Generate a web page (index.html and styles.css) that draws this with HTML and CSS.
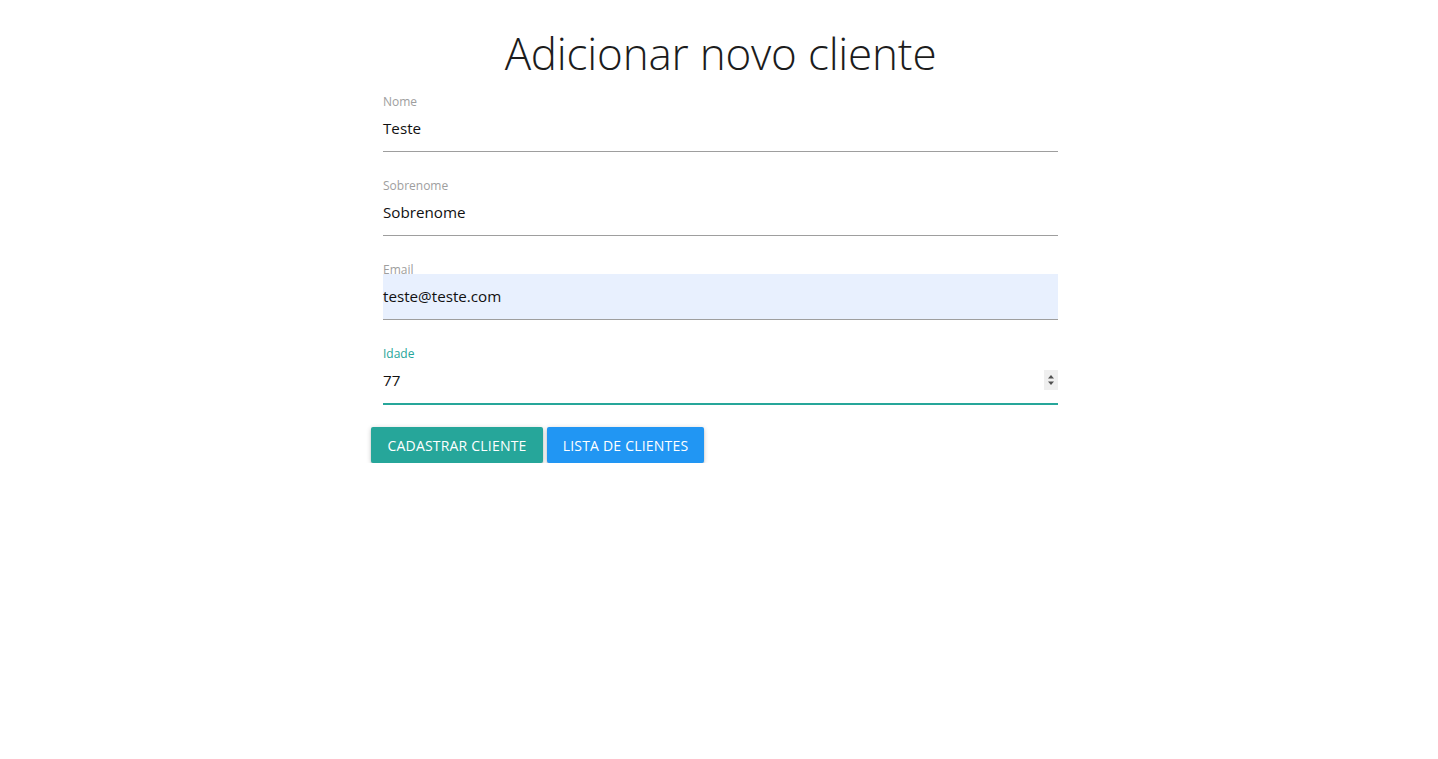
FILE: index.html
```html
<!DOCTYPE html>
<html lang="pt-BR">
<head>
<meta charset="utf-8">
<title>Adicionar novo cliente</title>
<link rel="stylesheet" href="styles.css">
</head>
<body>
<main class="page">
  <h1 class="title">Adicionar novo cliente</h1>
  <form class="form">
    <div class="fields">
      <div class="field">
        <label class="label">Nome</label>
        <div class="input">Teste</div>
      </div>
      <div class="field">
        <label class="label">Sobrenome</label>
        <div class="input">Sobrenome</div>
      </div>
      <div class="field">
        <label class="label">Email</label>
        <div class="input input--autofill">teste@teste.com</div>
      </div>
      <div class="field">
        <label class="label label--focus">Idade</label>
        <div class="input input--focus">
          <span>77</span>
          <span class="spinner">
            <svg width="14" height="20" viewBox="0 0 14 20">
              <rect width="14" height="20" fill="#efefef"/>
              <path d="M4 8.5 L7 5 L10 8.5 Z" fill="#505050"/>
              <path d="M4 11.5 L10 11.5 L7 15 Z" fill="#505050"/>
            </svg>
          </span>
        </div>
      </div>
    </div>
    <div class="actions">
      <button type="button" class="btn btn--teal">Cadastrar cliente</button>
      <button type="button" class="btn btn--blue">Lista de clientes</button>
    </div>
  </form>
</main>
</body>
</html>
```
FILE: styles.css
```css
* { box-sizing: border-box; }
html, body { margin: 0; padding: 0; background: #fff; }
body {
  font-family: "Open Sans", "Noto Sans", sans-serif;
  color: rgba(0,0,0,0.87);
}
.page { width: 1438px; padding-left: 3px; }
.title {
  margin: 25px 0 0;
  text-align: center;
  font-size: 44px;
  font-weight: 300;
  line-height: 56px;
  color: #1c1c1c;
  letter-spacing: -0.2px;
}
.form {
  width: 699px;
  margin: 0 auto;
}
.fields {
  padding: 0 12px;
  display: flex;
  flex-direction: column;
  gap: 27px;
  margin-top: 14px;
}
.field { display: flex; flex-direction: column; }
.label {
  font-size: 12px;
  line-height: 14px;
  color: #9e9e9e;
  margin-bottom: -3px;
  position: relative;
  z-index: 1;
}
.label--focus { color: #26a69a; }
.input {
  height: 46px;
  border-bottom: 1px solid #9e9e9e;
  font-size: 15.2px;
  line-height: 45px;
  color: #111;
  display: flex;
  align-items: center;
  justify-content: space-between;
}
.input--autofill { background: #e8f0fe; }
.input--focus {
  border-bottom: 1px solid #26a69a;
  box-shadow: 0 1px 0 0 #26a69a;
}
.spinner { display: flex; margin-top: -2px; }
.spinner svg { display: block; }
.actions {
  display: flex;
  gap: 4px;
  margin-top: 23px;
}
.btn {
  height: 36px;
  border: none;
  border-radius: 2px;
  padding: 0 12px;
  font-family: "Open Sans", "Noto Sans", sans-serif;
  font-size: 14px;
  text-transform: uppercase;
  color: #fff;
  letter-spacing: 0.2px;
  box-shadow: 0 2px 2px 0 rgba(0,0,0,0.14), 0 3px 1px -2px rgba(0,0,0,0.12), 0 1px 5px 0 rgba(0,0,0,0.2);
  cursor: pointer;
}
.btn--teal { background: #26a69a; width: 172px; }
.btn--blue { background: #2196f3; width: 157px; }
```
